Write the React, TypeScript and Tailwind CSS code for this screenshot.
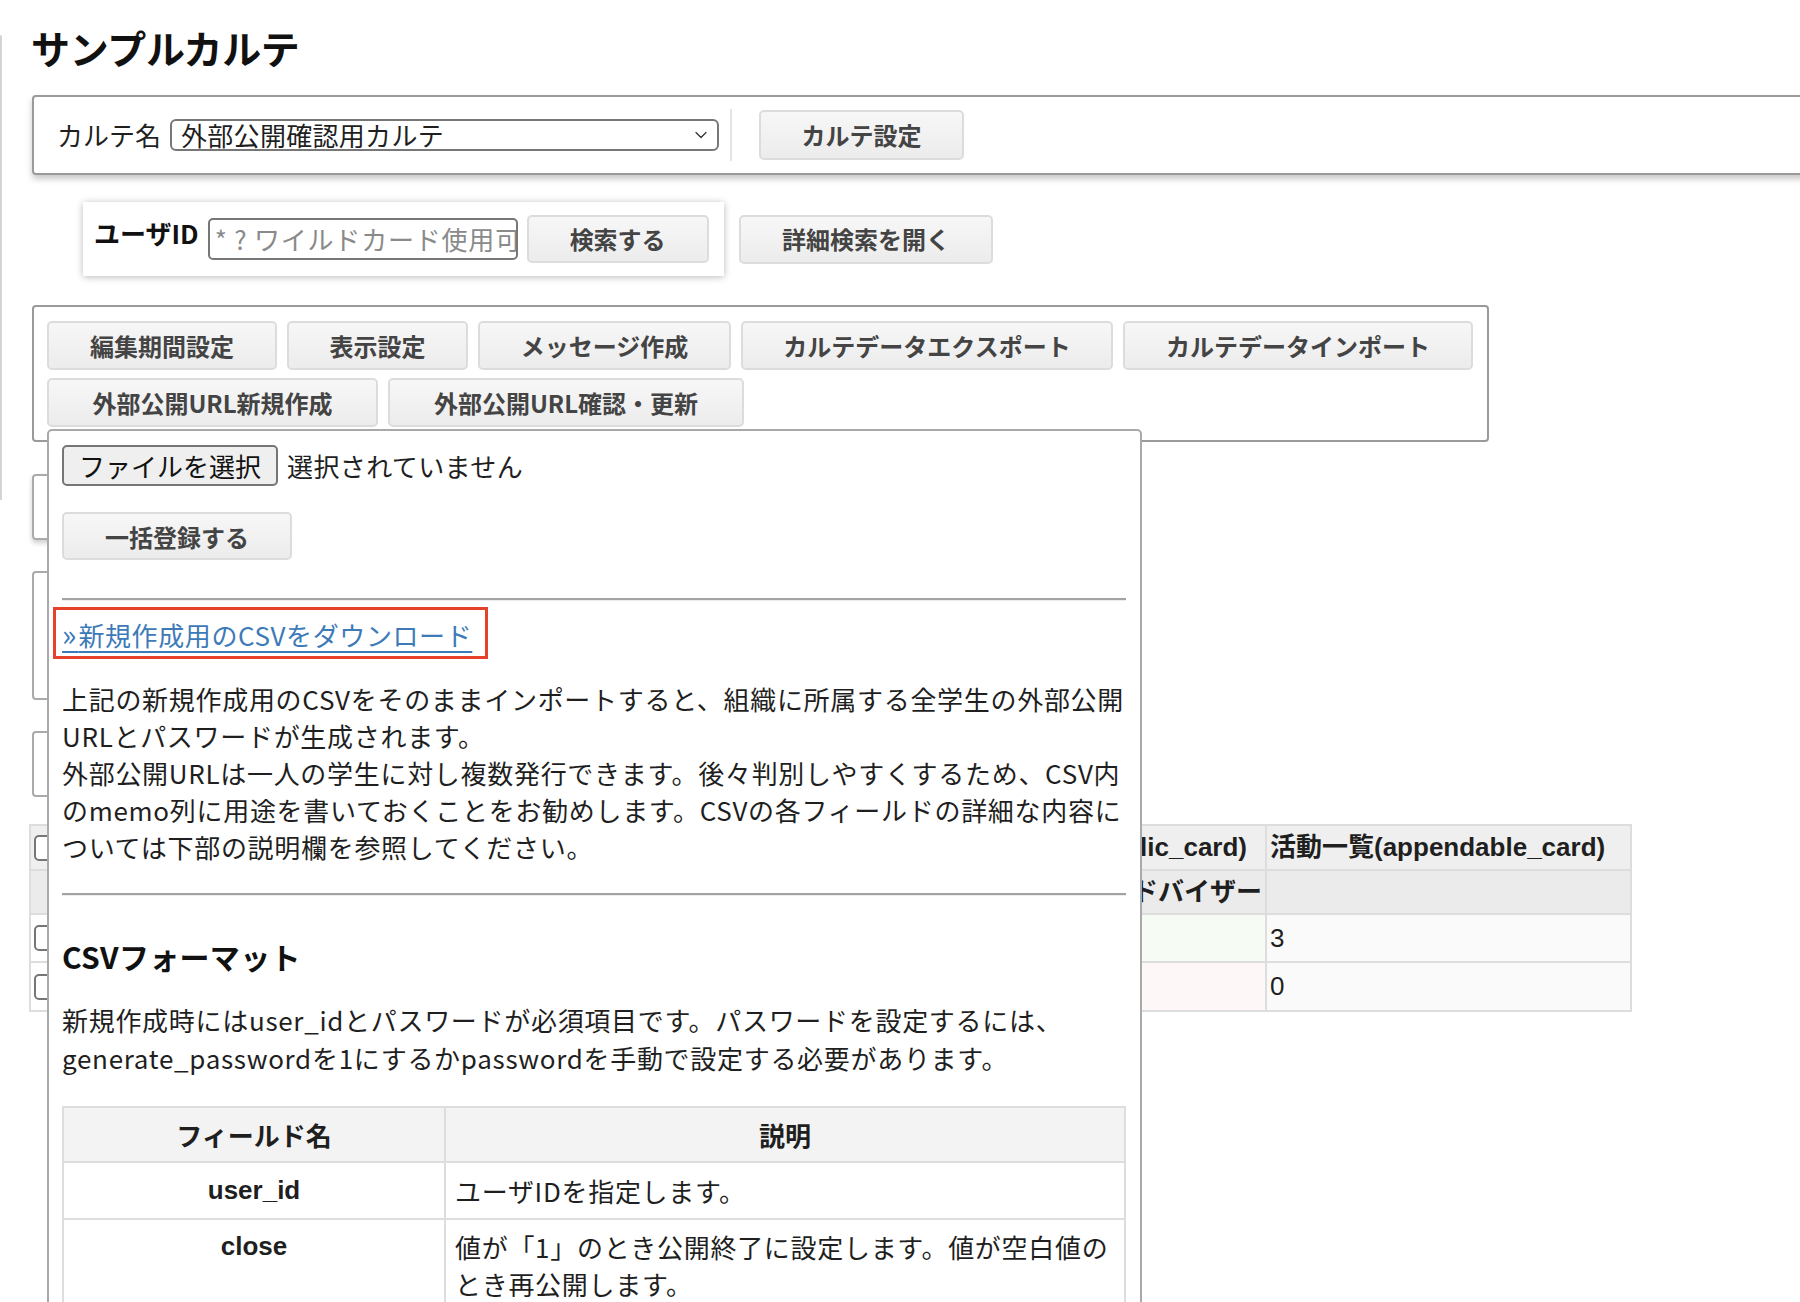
import { ChevronDown } from "lucide-react";
import type { ReactNode } from "react";

const jp = "font-['Noto_Sans_CJK_JP',sans-serif]";
const latin = "font-['Liberation_Sans','Noto_Sans_CJK_JP',sans-serif]";

function Btn({ className, children }: { className: string; children: ReactNode }) {
  return (
    <button
      type="button"
      className={`flex shrink-0 items-center justify-center rounded-[5px] border-2 border-[#dcdcdc] bg-linear-to-b from-[#f7f7f7] to-[#ececec] text-[24px] font-bold text-[#444] ${className}`}
    >
      {children}
    </button>
  );
}

function Checkbox() {
  return <span className="inline-block h-[26px] w-[26px] rounded-[5px] border-2 border-[#767676] bg-white align-middle" />;
}

export default function App() {
  return (
    <div className={`relative h-[1302px] w-[1800px] overflow-hidden bg-white text-[#1f1f1f] ${jp}`}>
      <div className="flex">
        {/* page frame edge */}
        <div className="mt-[35px] h-[465px] w-[2px] shrink-0 rounded-tr bg-[#d4d4d4]" />

        <div className="ml-[30px] min-w-0 flex-1">
          <h1 className="-ml-px mt-[25px] h-[44px] text-[39px] font-bold leading-[44px] tracking-[-0.3px] text-[#111]">
            サンプルカルテ
          </h1>

          {/* karte selector */}
          <div className="mt-[26px] flex h-[80px] w-[1800px] items-center rounded-[4px] border-2 border-[#9a9a9a] pl-[23px] shadow-[0_4px_6px_rgba(0,0,0,0.22)]">
            <span className="text-[26px] leading-none">カルテ名</span>
            <div className="ml-[9px] flex h-[32px] w-[549px] items-center rounded-[6px] border-2 border-[#777] pl-[9px] pr-[6px]">
              <span className="flex-1 text-[26px] leading-none tracking-[0.3px]">外部公開確認用カルテ</span>
              <ChevronDown size={20} strokeWidth={1.5} className="text-[#333]" />
            </div>
            <div className="ml-[11px] h-[52px] w-[2px] bg-[#e4e4e4]" />
            <Btn className="ml-[27px] h-[50px] w-[205px]">カルテ設定</Btn>
          </div>

          {/* user search */}
          <div className="mt-[27px] flex items-center">
            <div className="ml-[51px] flex h-[74px] w-[641px] items-center bg-white pl-[11px] shadow-[0_1px_7px_rgba(0,0,0,0.28)]">
              <span className="mb-[12px] text-[26px] font-bold leading-none text-[#111]">ユーザID</span>
              <div className="ml-[9px] flex h-[42px] w-[310px] items-center overflow-hidden rounded-[5px] border-2 border-[#777] pl-[5px]">
                <span className="whitespace-nowrap text-[26px] leading-none tracking-[0.8px] text-[#8a8a8a]">*&nbsp;?&nbsp;ワイルドカード使用可</span>
              </div>
              <Btn className="ml-[9px] h-[48px] w-[182px]">検索する</Btn>
            </div>
            <Btn className="ml-[15px] h-[49px] w-[254px]">詳細検索を開く</Btn>
          </div>

          {/* tool buttons */}
          <div className="mt-[29px] flex h-[137px] w-[1457px] flex-col gap-[8px] rounded-[4px] border-2 border-[#9a9a9a] pl-[13px] pt-[14px]">
            <div className="flex gap-[10px]">
              <Btn className="h-[49px] w-[230px]">編集期間設定</Btn>
              <Btn className="h-[49px] w-[181px]">表示設定</Btn>
              <Btn className="h-[49px] w-[253px]">メッセージ作成</Btn>
              <Btn className="h-[49px] w-[372px]">カルテデータエクスポート</Btn>
              <Btn className="h-[49px] w-[350px]">カルテデータインポート</Btn>
            </div>
            <div className="flex gap-[10px]">
              <Btn className="h-[49px] w-[331px]">外部公開URL新規作成</Btn>
              <Btn className="h-[49px] w-[356px]">外部公開URL確認・更新</Btn>
            </div>
          </div>

          {/* content hidden under the popover */}
          <div className="mt-[32px] h-[66px] w-[700px] rounded-[4px] border-2 border-[#aaa] shadow-[0_3px_5px_rgba(0,0,0,0.2)]" />
          <div className="mt-[31px] h-[129px] w-[700px] rounded-[4px] border-2 border-[#aaa]" />
          <div className="mt-[31px] h-[66px] w-[700px] rounded-[4px] border-2 border-[#aaa]" />

          <table className={`-ml-[3px] mt-[27px] w-[1601px] table-fixed border-collapse ${latin}`}>
            <colgroup>
              <col className="w-[60px]" />
              <col className="w-[1176px]" />
              <col className="w-[365px]" />
            </colgroup>
            <tbody>
              <tr className="h-[45px] bg-[#efefef]">
                <td className="border-2 border-[#ddd] pl-[3px]"><Checkbox /></td>
                <td className="border-2 border-[#ddd] pr-[18px] text-right text-[26px] font-bold">公開カード(public_card)</td>
                <td className="whitespace-nowrap border-2 border-[#ddd] pl-[3px] text-[26px] font-bold">活動一覧(appendable_card)</td>
              </tr>
              <tr className="h-[44px] bg-[#ebebeb]">
                <td className="border-2 border-[#ddd]" />
                <td className="border-2 border-[#ddd] pr-[3px] text-right text-[26px] font-bold">アドバイザー</td>
                <td className="border-2 border-[#ddd]" />
              </tr>
              <tr className="h-[48px]">
                <td className="border-2 border-[#ddd] pl-[3px]"><Checkbox /></td>
                <td className="border-2 border-[#ddd] bg-[#f6fbf4]" />
                <td className="border-2 border-[#ddd] bg-[#fafafa] pl-[3px] text-[26px]">3</td>
              </tr>
              <tr className="h-[49px]">
                <td className="border-2 border-[#ddd] pl-[3px]"><Checkbox /></td>
                <td className="border-2 border-[#ddd] bg-[#fdf8f7]" />
                <td className="border-2 border-[#ddd] bg-[#fafafa] pl-[3px] text-[26px]">0</td>
              </tr>
            </tbody>
          </table>
        </div>
      </div>

      {/* import popover */}
      <div className="absolute left-[47px] top-[429px] h-[1000px] w-[1095px] rounded-t-[5px] border-2 border-[#a9a9a9] bg-white pl-[13px] pr-[14px] pt-[14px] text-[26px] leading-[37px] tracking-[0.7px]">
        <div className="flex h-[41px] items-center">
          <button
            type="button"
            className="flex h-[41px] w-[216px] items-center justify-center rounded-[5px] border-2 border-[#767676] bg-[#efefef] text-[26px] leading-none tracking-normal text-[#111]"
          >
            ファイルを選択
          </button>
          <span className="ml-[9px] leading-none tracking-[0.4px]">選択されていません</span>
        </div>
        <Btn className="mt-[26px] h-[48px] w-[230px] tracking-normal">一括登録する</Btn>

        <div className="mt-[38px] h-[2px] bg-[#a3a3a3] shadow-[0_1px_1px_rgba(0,0,0,0.08)]" />

        <div className="-ml-[9px] mt-[7px] flex h-[52px] w-[435px] items-center border-[3px] border-[#e6412b] pl-[6px]">
          <a href="#" className="text-[26px] leading-none tracking-[0.6px] text-[#3d7ab8] underline decoration-[2px] underline-offset-[5px]">
            <span className="text-[30px] tracking-[2px]">»</span>新規作成用のCSVをダウンロード
          </a>
        </div>

        <p className="mt-[21px] whitespace-nowrap">
          上記の新規作成用のCSVをそのままインポートすると、組織に所属する全学生の外部公開
          <br />
          URLとパスワードが生成されます。
          <br />
          外部公開URLは一人の学生に対し複数発行できます。後々判別しやすくするため、CSV内
          <br />
          のmemo列に用途を書いておくことをお勧めします。CSVの各フィールドの詳細な内容に
          <br />
          ついては下部の説明欄を参照してください。
        </p>

        <div className="mt-[28px] h-[2px] bg-[#a3a3a3] shadow-[0_1px_1px_rgba(0,0,0,0.08)]" />

        <h2 className="mt-[41px] text-[30px] font-bold leading-[40px] tracking-[0.3px] text-[#111]">CSVフォーマット</h2>

        <p className="mt-[25px] whitespace-nowrap leading-[38px]">
          新規作成時にはuser_idとパスワードが必須項目です。パスワードを設定するには、
          <br />
          generate_passwordを1にするかpasswordを手動で設定する必要があります。
        </p>

        <table className="mt-[29px] w-full table-fixed border-collapse">
          <colgroup>
            <col className="w-[382px]" />
            <col />
          </colgroup>
          <thead>
            <tr className="h-[55px] bg-[#f3f3f3]">
              <th className="border-2 border-[#dddddd] text-[26px] font-bold tracking-normal">フィールド名</th>
              <th className="border-2 border-[#dddddd] text-[26px] font-bold tracking-normal">説明</th>
            </tr>
          </thead>
          <tbody>
            <tr className="h-[57px]">
              <th className={`border-2 border-[#dddddd] text-[26px] font-bold tracking-normal ${latin}`}>user_id</th>
              <td className="border-2 border-[#dddddd] pl-[9px]">ユーザIDを指定します。</td>
            </tr>
            <tr>
              <th className={`border-2 border-[#dddddd] pt-[8px] align-top text-[26px] font-bold tracking-normal ${latin}`}>close</th>
              <td className="border-2 border-[#dddddd] pb-[10px] pl-[9px] pt-[8px]">
                値が「1」のとき公開終了に設定します。値が空白値の
                <br />
                とき再公開します。
              </td>
            </tr>
          </tbody>
        </table>
      </div>
    </div>
  );
}
